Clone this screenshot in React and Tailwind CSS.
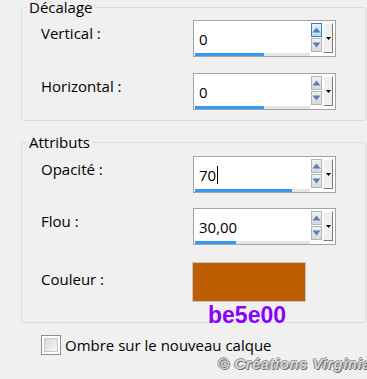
const font = { fontFamily: '"Open Sans", "Noto Sans", sans-serif' };

function SpinArrow({ dir, hot }) {
  return (
    <div
      className={
        "w-[11px] h-[14px] border flex items-center justify-center " +
        (hot
          ? "border-[#3c7fb1] bg-gradient-to-b from-[#e5f4fc] to-[#b3dcf3]"
          : "border-[#b5b5b5] bg-gradient-to-b from-[#f2f2f2] to-[#d9d9d9]")
      }
    >
      <svg width="9" height="6" viewBox="0 0 9 6">
        {dir === "up" ? (
          <polygon points="0.5,5.5 4.5,0.5 8.5,5.5" fill="#5f78c8" />
        ) : (
          <polygon points="0.5,0.5 8.5,0.5 4.5,5.5" fill="#5f78c8" />
        )}
      </svg>
    </div>
  );
}

function SpinBox({ value, bar, hot, caret }) {
  return (
    <div className="w-[143px] h-[37px] border border-[#a3a3a3] bg-white flex pr-[2px]">
      <div className="flex-1 flex flex-col">
        <div className="pl-[5px] pt-[8px] text-[15px] leading-[20px] text-black flex items-center">
          {value}
          {caret && <span className="ml-[1px] w-px h-[18px] bg-black" />}
        </div>
        <div className="mt-[4px] ml-px h-[3px] bg-[#e6e6e6]">
          <div className="h-full bg-[#3399f3]" style={{ width: bar }} />
        </div>
      </div>
      <div className="flex flex-col gap-px pt-[2px] ml-px">
        <SpinArrow dir="up" hot={hot} />
        <SpinArrow dir="down" />
      </div>
      <div className="ml-px mt-[2px] w-[10px] h-[30px] bg-[#f0f0f0] border-t border-l border-t-white border-l-white border-r border-b border-r-[#7a7a7a] border-b-[#7a7a7a] flex items-center justify-center">
        <svg width="5" height="3" viewBox="0 0 5 3">
          <polygon points="0,0 5,0 2.5,3" fill="#000" />
        </svg>
      </div>
    </div>
  );
}

function Row({ label, children, top = 3 }) {
  return (
    <div className="flex items-start">
      <div
        className="w-[152px] text-[15px] leading-[20px] text-black"
        style={{ paddingTop: top }}
      >
        {label}
      </div>
      {children}
    </div>
  );
}

export default function App() {
  return (
    <div
      className="w-[367px] h-[379px] bg-[#f0f0f0] overflow-hidden relative"
      style={font}
    >
      <fieldset className="ml-[21px] w-[345px] border border-[#d5dfe5] rounded-[3px]">
        <legend className="ml-[5px] px-[2px] text-[15px] leading-[14px] text-black">
          Décalage
        </legend>
        <div className="pl-[19px] pt-[6px] pb-[10px] flex flex-col gap-[16px]">
          <Row label="Vertical :">
            <SpinBox value="0" bar="69px" hot />
          </Row>
          <Row label="Horizontal :">
            <SpinBox value="0" bar="69px" />
          </Row>
        </div>
      </fieldset>

      <fieldset className="mt-[14px] ml-[21px] w-[345px] border border-[#d5dfe5] rounded-[3px]">
        <legend className="ml-[5px] px-[2px] text-[15px] leading-[14px] text-black">
          Attributs
        </legend>
        <div className="pl-[19px] pt-[7px] pb-[20px] flex flex-col">
          <Row label="Opacité :">
            <SpinBox value="70" bar="97px" caret />
          </Row>
          <div className="mt-[15px]">
            <Row label="Flou :">
              <SpinBox value="30,00" bar="41px" />
            </Row>
          </div>
          <div className="mt-[17px]">
            <Row label="Couleur :" top={7}>
              <div className="relative -ml-px">
                <div className="w-[114px] h-[40px] bg-[#be5e00] border border-[#c4c4c4]" />
                <div
                  className="absolute left-[16px] top-[40px] text-[23px] leading-[26px] font-bold text-[#8a00ff]"
                  style={{ fontFamily: '"Liberation Sans", Arial, sans-serif' }}
                >
                  be5e00
                </div>
              </div>
            </Row>
          </div>
        </div>
      </fieldset>

      <div className="mt-[12px] ml-[41px] flex items-center">
        <div className="w-[20px] h-[20px] border border-[#8e8f8f] bg-white p-[2px]">
          <div className="w-full h-full bg-gradient-to-br from-[#d8d8d8] to-[#f7f7f7] border border-[#c8c8c8]" />
        </div>
        <span className="ml-[4px] text-[15px] leading-[20px] text-black">
          Ombre sur le nouveau calque
        </span>
      </div>

      <div
        className="absolute left-[218px] top-[354px] whitespace-nowrap text-[15px] leading-[20px] font-bold italic tracking-[0.5px] text-[#d6d6d6] [text-shadow:1px_1px_0_#6e6e6e,-1px_0_0_#8a8a8a,0_-1px_0_#9a9a9a]"
        style={{ fontFamily: '"Liberation Sans", Arial, sans-serif' }}
      >
        © Créations Virginia
      </div>
    </div>
  );
}
